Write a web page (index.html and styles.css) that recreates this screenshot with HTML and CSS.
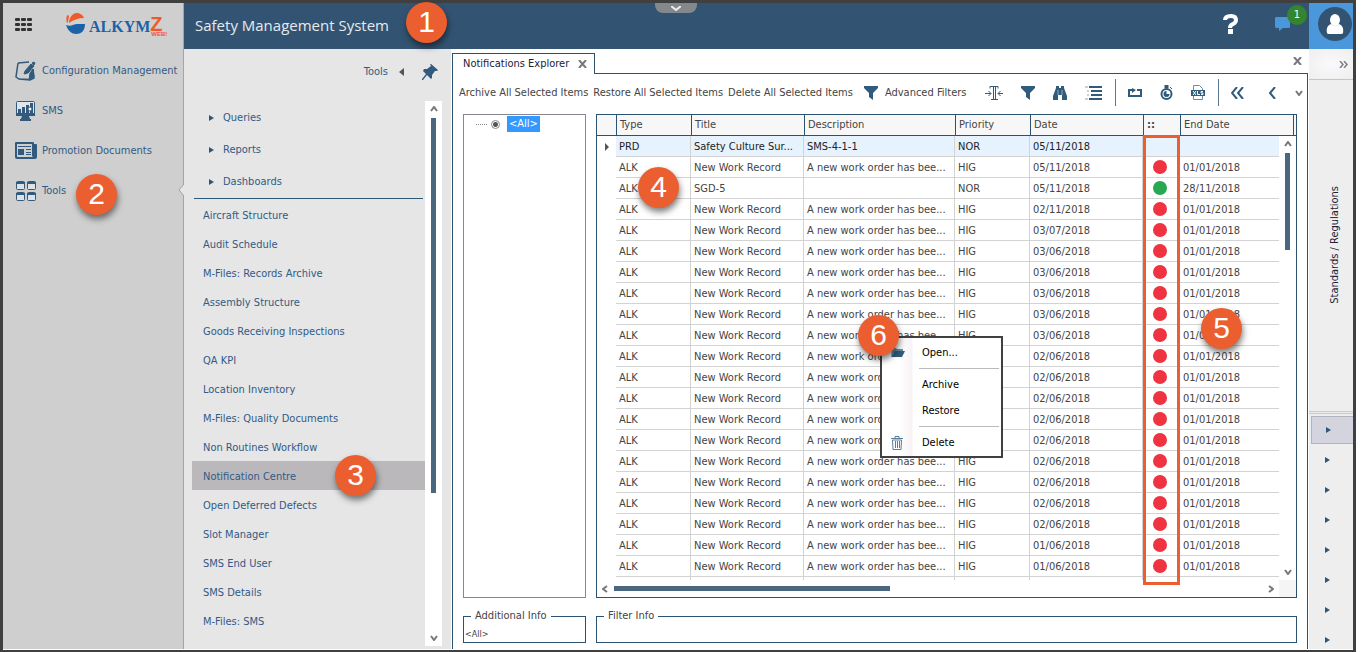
FILE: index.html
```html
<!DOCTYPE html>
<html lang="en">
<head>
  <meta charset="UTF-8" />
  <meta name="viewport" content="width=device-width, initial-scale=1.0"/>
  <title>Safety Management System</title>
  <link rel="stylesheet" href="styles.css">
</head>
<body>

<div class="app">

  <!-- Left menu -->
  <nav class="sidebar">
    <div class="brand">
      <button class="icon-btn" aria-label="Applications">
        <svg width="17" height="13" viewBox="0 0 17 13" fill="#333"><rect width="5" height="3" rx="1"/><rect x="6" width="5" height="3" rx="1"/><rect x="12" width="5" height="3" rx="1"/><rect y="5" width="5" height="3" rx="1"/><rect x="6" y="5" width="5" height="3" rx="1"/><rect x="12" y="5" width="5" height="3" rx="1"/><rect y="10" width="5" height="3" rx="1"/><rect x="6" y="10" width="5" height="3" rx="1"/><rect x="12" y="10" width="5" height="3" rx="1"/></svg>
      </button>
      <a class="logo" href="#">
        <svg width="20" height="22" viewBox="0 0 20 22"><path d="M1 10C0 6 0 3 2 2l1 1-1 6z" fill="#f05a28"/><path d="M3 10C3 5 6 1 10 0c4 0 7 2 8 5C12 5 7 7 3 10z" fill="#f05a28"/><path d="M0 12c5 2 8-1 11-1h8c0 7-4 10-9 10-4 0-8-3-10-9z" fill="#1b62a8"/></svg>
        <span class="logo-name">ALKYM</span><span class="logo-z">Z<small>WEB!</small></span>
      </a>
    </div>
    <ul class="menu">
      <li><a href="#">
        <svg width="22" height="20" viewBox="0 0 22 20" fill="none" stroke="#325a7d"><path d="M3 2l11-1M18 8l1 9-4 2-11-1L1 16 3 2M4 18l11 .500" stroke-width="1.500"/><path d="M14 19l5-3-1-8-3 4z" fill="#325a7d"/><path d="M9 13l1-3 6-7 3 2-6 7z" fill="#325a7d"/><path d="M17 2l2 2 1-2-1-1z" fill="#325a7d"/></svg>
        Configuration Management</a></li>
      <li><a href="#">
        <svg width="22" height="20" viewBox="0 0 22 20"><rect x="1.500" y=".500" width="18" height="14" rx="1" fill="#dfe5ea" stroke="#325a7d"/><path d="M1 12h19v3H1zM7 15h7l1 3H6zM5 18h11v2H5zM3 8h3v4H3zM7 6h3v6H7zM11 4h3v8h-3zM15 2h3v10h-3z" fill="#325a7d"/><circle cx="15" cy="8" r="2" fill="#fff" stroke="#325a7d"/></svg>
        SMS</a></li>
      <li><a href="#">
        <svg width="22" height="20" viewBox="0 0 22 20" fill="#325a7d"><path d="M0 2q0-1 1-1h17q1 0 1 1v1h2q1 0 1 1v12q0 2-2 2H2q-2 0-2-2zM2 3v12q0 1 1 1h15l-1-1V3z" fill-rule="evenodd"/><path d="M3 5h13v1H3zM3 8h6v6H3zM11 8h5v1h-5zM11 11h5v1h-5zM11 13h5v1h-5z"/></svg>
        Promotion Documents</a></li>
      <li class="open"><a href="#">
        <svg width="22" height="20" viewBox="0 0 22 20"><g fill="#dde2e6" stroke="#325a7d"><rect x="1.500" y=".500" width="8" height="8" rx="1"/><rect x="12.500" y=".500" width="8" height="8" rx="1"/><rect x="1.500" y="11.500" width="8" height="8" rx="1"/><rect x="12.500" y="11.500" width="8" height="8" rx="1"/></g><path d="M1 1h9v2H1zM12 1h9v2h-9zM1 12h9v2H1zM12 12h9v2h-9z" fill="#325a7d"/></svg>
        Tools</a>
        <svg class="notch" width="6" height="12" viewBox="0 0 6 12"><path d="M6 0L1 6l5 6" fill="#e6e6e6" stroke="#a0a0a0"/></svg>
        <span class="callout callout-2">2</span>
      </li>
    </ul>
  </nav>

  <!-- Top bar -->
  <header class="topbar">
    <h1>Safety Management System</h1>
    <span class="callout callout-1">1</span>
    <button class="pull-tab" aria-label="Expand header"><svg width="10" height="5" viewBox="0 0 10 5"><path d="M0 0l5 4 5-4" fill="none" stroke="#eee" stroke-width="2"/></svg></button>
    <div class="top-actions">
      <button class="icon-btn" aria-label="Help"><svg width="16" height="20" viewBox="0 0 16 20"><path d="M2 6C2 3 4 2 8 2s5 2 5 4-1 3-3 4-3 1-3 4" fill="none" stroke="#fff" stroke-width="4"/><rect x="5" y="15" width="5" height="5" fill="#fff"/></svg></button>
      <button class="icon-btn messages" aria-label="Messages"><svg width="15" height="14" viewBox="0 0 15 14"><path d="M1 0h13l1 1v9l-1 1H8l-4 3v-3H1l-1-1V1z" fill="#4b97db"/></svg><span class="count">1</span></button>
    </div>
    <button class="user" aria-label="User">
      <svg width="34" height="34" viewBox="0 0 34 34"><circle cx="17" cy="17" r="17" fill="#325472"/><path d="M9 26c-1-5 1-8 4-9q4 3 8 0c3 1 5 4 4 9q0 1-2 1H11q-2 0-2-1z" fill="#fff"/><ellipse cx="17" cy="13" rx="5" ry="6" fill="#fff"/></svg>
    </button>
  </header>

  <!-- Tools panel -->
  <aside class="panel">
    <div class="panel-head">
      <span>Tools</span>
      <svg width="5" height="8" viewBox="0 0 5 8"><path d="M5 0v8L0 4z" fill="#555"/></svg>
      <button class="icon-btn" aria-label="Pin"><svg width="16" height="16" viewBox="0 0 16 16"><path d="M9 0l7 6-1 1-2 0-3 4 0 3-1 1-4-4-4 5-1 0 0-1 4-5-3-3 1-2h3l4-3-1-2z" fill="#325a7d"/></svg></button>
    </div>
    <div class="panel-body">
      <div class="panel-list">
        <ul class="tree">
          <li><a href="#">Queries</a></li>
          <li><a href="#">Reports</a></li>
          <li><a href="#">Dashboards</a></li>
        </ul>
        <ul class="links">
          <li><a href="#">Aircraft Structure</a></li>
          <li><a href="#">Audit Schedule</a></li>
          <li><a href="#">M-Files: Records Archive</a></li>
          <li><a href="#">Assembly Structure</a></li>
          <li><a href="#">Goods Receiving Inspections</a></li>
          <li><a href="#">QA KPI</a></li>
          <li><a href="#">Location Inventory</a></li>
          <li><a href="#">M-Files: Quality Documents</a></li>
          <li><a href="#">Non Routines Workflow</a></li>
          <li class="current"><a href="#">Notification Centre</a><span class="callout callout-3">3</span></li>
          <li><a href="#">Open Deferred Defects</a></li>
          <li><a href="#">Slot Manager</a></li>
          <li><a href="#">SMS End User</a></li>
          <li><a href="#">SMS Details</a></li>
          <li><a href="#">M-Files: SMS</a></li>
        </ul>
      </div>
      <div class="scroll-v">
        <svg width="8" height="6" viewBox="0 0 8 6"><path d="M1 5l3-4 3 4" fill="none" stroke="#777" stroke-width="2"/></svg>
        <span class="thumb"></span>
        <svg width="8" height="6" viewBox="0 0 8 6"><path d="M1 1l3 4 3-4" fill="none" stroke="#777" stroke-width="2"/></svg>
      </div>
    </div>
  </aside>

  <!-- Notifications Explorer -->
  <main class="content">
    <div class="tabs">
      <div class="tab">Notifications Explorer
        <button class="icon-btn" aria-label="Close tab"><svg width="9" height="8" viewBox="0 0 9 8"><path d="M1 0l7 8M8 0L1 8" stroke="#77777f" stroke-width="2"/></svg></button>
      </div>
      <button class="icon-btn close-all" aria-label="Close"><svg width="9" height="8" viewBox="0 0 9 8"><path d="M1 0l7 8M8 0L1 8" stroke="#77777f" stroke-width="2"/></svg></button>
    </div>

    <div class="page">
      <div class="toolbar">
        <button>Archive All Selected Items</button>
        <button>Restore All Selected Items</button>
        <button>Delete All Selected Items</button>
        <button class="advanced"><svg width="14" height="14" viewBox="0 0 14 14"><path d="M0 0h14v2L9 7v7l-4-3V7L0 2z" fill="#2f5b7c"/></svg>Advanced Filters</button>
        <div class="tools">
          <button aria-label="Fit columns"><svg width="18" height="16" viewBox="0 0 18 16" fill="none" stroke="#325a7d"><path d="M5 3.500V1.500h8v2M8.500 1v13M10.500 1v13M6 14.500h7"/><path d="M0 8.500h6M3.500 6l2.500 2.500L3.500 11M18 8.500h-5M15.500 6L13 8.500l2.500 2.500"/></svg></button>
          <button aria-label="Filter"><svg width="14" height="14" viewBox="0 0 14 14"><path d="M0 0h14v2L9 7v7l-4-3V7L0 2z" fill="#2f5b7c"/></svg></button>
          <button aria-label="Find"><svg width="14" height="14" viewBox="0 0 14 14"><path d="M3 0h3v2h2V0h3v2l3 8v4H9V9H5v5H0v-4l3-8z" fill="#2f5b7c"/><path d="M5 4v5M9 4v5" stroke="#9ab" /></svg></button>
          <button aria-label="Group"><svg width="17" height="14" viewBox="0 0 17 14"><path d="M4 0h13v2H4zM6 4h11v2H6zM6 8h11v2H6zM4 12h13v2H4z" fill="#2f5b7c"/><path d="M0 1h3M2 5h2M2 9h2M0 13h3" stroke="#8aa"/></svg></button>
          <span class="sep"></span>
          <button aria-label="Refresh"><svg width="14" height="10" viewBox="0 0 14 10"><path d="M4 2H1v6h12V2H9" fill="none" stroke="#2f5b7c" stroke-width="2"/><path d="M4 0l4 2-4 3z" fill="#2f5b7c"/></svg></button>
          <button aria-label="Timer"><svg width="13" height="15" viewBox="0 0 13 15"><path d="M5 0h3v3H5zM10 2l2 2" stroke="#2f5b7c" fill="#2f5b7c"/><circle cx="6.500" cy="9" r="5" fill="#fff" stroke="#2f5b7c" stroke-width="2"/><path d="M6.500 6v3h3a3 3 0 1 1-3-3" fill="#2f5b7c"/></svg></button>
          <button aria-label="Export to XLS"><svg width="14" height="15" viewBox="0 0 14 15"><path d="M2.500 5V.500h6l3 3V5M2.500 11v3.500h9V11" fill="none" stroke="#6f8ca3"/><rect y="5" width="14" height="6" fill="#2f5b7c"/><path d="M2 6l3 4M5 6l-3 4M6.500 6v3.500H9M12 6.500h-2v1.500h2v1.500h-2" fill="none" stroke="#fff"/></svg></button>
          <span class="sep"></span>
          <button aria-label="First"><svg width="13" height="12" viewBox="0 0 13 12"><path d="M6 0L1 6l5 6M12 0L7 6l5 6" fill="none" stroke="#2f5b7c" stroke-width="2"/></svg></button>
          <button class="prev" aria-label="Previous"><svg width="9" height="12" viewBox="0 0 9 12"><path d="M7 0L2 6l5 6" fill="none" stroke="#2f5b7c" stroke-width="2"/></svg></button>
          <button aria-label="More"><svg width="8" height="6" viewBox="0 0 8 6"><path d="M1 1l3 4 3-4" fill="none" stroke="#777" stroke-width="2"/></svg></button>
        </div>
      </div>

      <div class="work">
        <div class="filter-tree">
          <label><span class="dots"></span><input type="radio" name="filter" checked><span class="picked">&lt;All&gt;</span></label>
        </div>

        <div class="grid">
          <div class="grid-view">
            <table>
              <colgroup><col class="c-mark"><col class="c-type"><col class="c-title"><col class="c-desc"><col class="c-prio"><col class="c-date"><col class="c-state"><col><col class="c-end"></colgroup>
              <thead>
                <tr><th></th><th>Type</th><th>Title</th><th>Description</th><th>Priority</th><th>Date</th><th>::</th><th>End Date</th><th></th></tr>
              </thead>
              <tbody id="rows"></tbody>
            </table>
            <div class="scroll-v grid-scroll">
              <svg width="8" height="6" viewBox="0 0 8 6"><path d="M1 5l3-4 3 4" fill="none" stroke="#777" stroke-width="2"/></svg>
              <span class="thumb"></span>
              <svg width="8" height="6" viewBox="0 0 8 6"><path d="M1 1l3 4 3-4" fill="none" stroke="#777" stroke-width="2"/></svg>
            </div>
          </div>
          <div class="scroll-h">
            <svg width="6" height="8" viewBox="0 0 6 8"><path d="M5 1L1 4l4 3" fill="none" stroke="#777" stroke-width="2"/></svg>
            <span class="thumb"></span>
            <svg width="6" height="8" viewBox="0 0 6 8"><path d="M1 1l4 3-4 3" fill="none" stroke="#777" stroke-width="2"/></svg>
          </div>

          <div class="outline"></div>
          <span class="callout callout-4">4</span>
          <span class="callout callout-5">5</span>

          <div class="context-menu" role="menu">
            <button role="menuitem"><svg width="14" height="10" viewBox="0 0 14 10"><path d="M1 0h4l1 1h6v3H4L0 8z" fill="#6f8ca3"/><path d="M4 3h10l-3 6H0z" fill="#2f5b7c"/></svg>Open...</button>
            <hr>
            <button role="menuitem">Archive</button>
            <button role="menuitem">Restore</button>
            <hr>
            <button role="menuitem"><svg width="12" height="14" viewBox="0 0 12 14" fill="none" stroke="#5b7d99"><path d="M4 2V.500h4V2M0 2.500h12M1.500 4l.500 9.500h8l.500-9.500z"/><path d="M4.500 5v7M6.500 5v7M8.500 5v7"/></svg>Delete</button>
            <span class="callout callout-6">6</span>
          </div>
        </div>

        <fieldset><legend>Additional Info</legend><small>&lt;All&gt;</small></fieldset>
        <fieldset><legend>Filter Info</legend></fieldset>
      </div>
    </div>
  </main>

  <!-- Right rail -->
  <aside class="rail">
    <button class="rail-head" aria-label="Collapse"><svg width="9" height="7" viewBox="0 0 9 7"><path d="M1 0l3 3.500L1 7M5 0l3 3.500L5 7" fill="none" stroke="#7d7d88" stroke-width="1.500"/></svg></button>
    <div class="rail-title"><span>Standards / Regulations</span></div>
    <div class="rail-items">
      <button class="on" aria-label="Section 1"></button>
      <button aria-label="Section 2"></button>
      <button aria-label="Section 3"></button>
      <button aria-label="Section 4"></button>
      <button aria-label="Section 5"></button>
      <button aria-label="Section 6"></button>
      <button aria-label="Section 7"></button>
      <button aria-label="Section 8"></button>
    </div>
  </aside>

</div>

<script src="script.js"></script>
</body>
</html>
```
FILE: styles.css
```css
* {
  box-sizing: border-box;
}

body {
  margin: 0;
  background: #fff;
  font-family: "DejaVu Sans Condensed", "DejaVu Sans", "Noto Sans", sans-serif;
  font-stretch: condensed;
  font-size: 11px;
  line-height: 16px;
  color: #444;
}

ul {
  list-style: none;
  margin: 0;
  padding: 0;
}

a {
  color: #325a85;
  text-decoration: none;
}

button {
  display: flex;
  align-items: center;
  padding: 0;
  border: none;
  background: none;
  font: inherit;
  color: inherit;
  white-space: nowrap;
  cursor: pointer;
}

svg {
  display: block;
  flex: none;
}

.app {
  display: grid;
  grid-template-columns: 181px 267px 1fr 44px;
  grid-template-rows: 46px 1fr;
  height: 100vh;
  margin-right: 5px;
  padding-bottom: 1px;
  border: 3px solid #404040;
  border-bottom-width: 2px;
}

/* numbered circles */
.callout {
  position: absolute;
  z-index: 5;
  width: 41px;
  height: 41px;
  border-radius: 50%;
  background: #eb5e30;
  box-shadow: 1px 4px 6px rgba(0, 0, 0, 0.5);
  color: #fff;
  font-family: "Liberation Sans", Arial, sans-serif;
  font-stretch: normal;
  font-size: 30px;
  line-height: 40px;
  text-align: center;
}

.callout-1 { left: 222px; top: -1px; }
.callout-2 { left: 73px; top: 3px; }
.callout-3 { left: 143px; top: -6px; }
.callout-4 { left: 41px; top: 52px; }
.callout-5 { right: 54px; top: 193px; }
.callout-6 { left: -24px; top: -23px; }

/* left menu */
.sidebar {
  grid-row: 1 / 3;
  background: #cfcfcf;
  border-right: 1px solid #a5a5a5;
}

.brand {
  display: flex;
  align-items: center;
  gap: 34px;
  height: 48px;
  padding: 0 0 6px 12px;
}

.logo {
  display: flex;
  align-items: center;
}

.logo-name {
  margin-left: 3px;
  padding-top: 5px;
  font: bold 16px/20px "Liberation Serif", serif;
  color: #1b62a8;
}

.logo-z {
  position: relative;
  font: bold 20px/20px "Liberation Sans", sans-serif;
  color: #f05a28;
}

.logo-z small {
  position: absolute;
  left: 1px;
  top: 10px;
  font-size: 6px;
}

.menu li {
  position: relative;
}

.menu a {
  display: flex;
  align-items: center;
  gap: 5px;
  height: 40px;
  padding-left: 12px;
  white-space: nowrap;
}

.notch {
  position: absolute;
  right: -1px;
  top: 13px;
}

/* top bar */
.topbar {
  grid-column: 2 / 5;
  position: relative;
  display: flex;
  align-items: center;
  background: #325472;
}

.topbar h1 {
  margin: 0 0 0 11px;
  padding-bottom: 3px;
  font: 15px/20px "Open Sans", "Noto Sans", sans-serif;
  color: #e6eaee;
}

.pull-tab {
  position: absolute;
  left: 471px;
  top: 0;
  width: 42px;
  height: 10px;
  justify-content: center;
  background: #83888d;
  border-radius: 0 0 8px 8px;
}

.top-actions {
  display: flex;
  align-items: center;
  gap: 36px;
  margin-left: auto;
  padding: 0 19px 5px 0;
}

.messages {
  position: relative;
}

.count {
  position: absolute;
  left: 12px;
  top: -12px;
  width: 20px;
  height: 20px;
  border-radius: 50%;
  background: #34852f;
  color: #fff;
  line-height: 20px;
}

.user {
  width: 44px;
  height: 46px;
  justify-content: flex-end;
  padding: 0 1px 5px 0;
  background: #4b97db;
}

/* tools panel */
.panel {
  display: flex;
  flex-direction: column;
  min-height: 0;
  padding-bottom: 3px;
  background: #e6e6e6;
  color: #325a85;
}

.panel-head {
  display: flex;
  align-items: center;
  justify-content: flex-end;
  gap: 11px;
  height: 46px;
  margin-bottom: 6px;
  padding-right: 13px;
}

.panel-head .icon-btn {
  margin-left: 7px;
}

.panel-body {
  flex: 1;
  display: flex;
  min-height: 0;
  padding-right: 9px;
}

.panel-list {
  flex: 1;
  overflow: hidden;
  padding: 1px 0 0 8px;
}

.tree {
  margin: 0 2px 1px;
  border-bottom: 1px solid #2c5878;
}

.tree li {
  display: flex;
  align-items: center;
  height: 32px;
  padding-left: 15px;
}

.tree li::before,
.rail-items button::before {
  content: "";
  border: 3px solid transparent;
  border-left: 5px solid #2c5878;
  border-right: 0;
}

.tree a {
  padding-left: 9px;
}

.links li {
  position: relative;
  height: 29px;
  padding-left: 11px;
  line-height: 31px;
}

.links .current {
  background: #bbb8bc;
}

/* scrollbars */
.scroll-v {
  display: flex;
  flex-direction: column;
  align-items: center;
  width: 17px;
  padding: 5px 0;
  background: #fff;
}

.thumb {
  background: #4b677f;
}

.scroll-v .thumb {
  width: 5px;
  height: 70%;
  margin: 6px 0 auto;
}

.scroll-h {
  display: flex;
  align-items: center;
  height: 17px;
  padding: 0 22px 0 5px;
  background: linear-gradient(#f5f5f5, #f5f5f5) right / 17px 100% no-repeat;
}

.scroll-h .thumb {
  width: 41%;
  height: 5px;
  margin: 0 auto 0 6px;
}

/* main area */
.content {
  display: flex;
  flex-direction: column;
  min-width: 0;
  min-height: 0;
  margin-right: 1px;
  padding-left: 1px;
}

.tabs {
  display: flex;
  height: 25px;
  padding-top: 4px;
}

.tab {
  position: relative;
  z-index: 1;
  display: flex;
  align-items: center;
  gap: 9px;
  height: 21px;
  padding: 0 7px 0 10px;
  background: #fff;
  border: 1px solid #2c5272;
  border-bottom: 0;
  color: #223;
}

.close-all {
  height: 16px;
  margin-left: auto;
  padding-right: 6px;
}

.page {
  flex: 1;
  display: flex;
  flex-direction: column;
  min-height: 0;
  margin-top: -1px;
  border: 1px solid #2c5272;
  border-bottom: 0;
}

.toolbar {
  display: flex;
  align-items: center;
  gap: 5px;
  height: 37px;
  padding: 0 4px 0 6px;
}

.advanced {
  gap: 7px;
  margin-left: 6px;
}

.tools {
  flex: 1;
  display: flex;
  align-items: center;
  justify-content: space-between;
  padding-left: 14px;
}

.sep {
  width: 1px;
  height: 27px;
  margin: 0 -5px;
  background: #5b7690;
}

.prev {
  margin-left: 6px;
}

.work {
  flex: 1;
  display: grid;
  grid-template-columns: 123px minmax(0, 1fr);
  grid-template-rows: minmax(0, 1fr) 35px;
  gap: 10px;
  min-height: 0;
  padding: 3px 10px 6px;
}

.filter-tree {
  border: 1px solid #888693;
}

.filter-tree label {
  display: flex;
  align-items: center;
  gap: 4px;
  height: 18px;
  padding-left: 12px;
}

.dots {
  width: 11px;
  border-top: 1px dotted #888;
}

.filter-tree input {
  appearance: none;
  width: 9px;
  height: 9px;
  margin: 0 3px 0 0;
  border: 1px solid #888;
  border-radius: 50%;
  background: radial-gradient(#555 2px, #fff 3px);
}

.picked {
  padding: 0 2px;
  background: #3399ff;
  color: #fff;
}

/* grid */
.grid {
  position: relative;
  display: flex;
  flex-direction: column;
  border: 1px solid #2c5272;
}

.grid-view {
  flex: 1;
  position: relative;
  min-height: 0;
  overflow: hidden;
}

table {
  width: 100%;
  table-layout: fixed;
  border-collapse: separate;
  border-spacing: 0;
}

.c-mark { width: 19px; }
.c-type, .c-prio { width: 75px; }
.c-title, .c-date { width: 113px; }
.c-desc { width: 151px; }
.c-state { width: 37px; }
.c-end { width: 3px; }

th {
  height: 21px;
  padding: 0 3px;
  border-bottom: 1px solid #2c5272;
  border-left: 1px solid #2c5272;
  background: #f7f7f7;
  font-weight: normal;
  text-align: left;
}

th:first-child {
  border-left: 0;
}

th:last-child {
  padding: 0;
}

th:nth-child(7) {
  font-weight: bold;
}

td {
  height: 21px;
  padding: 1px 3px 0;
  border-bottom: 1px solid #d3d3d3;
  border-right: 1px solid #d3d3d3;
  white-space: nowrap;
}

td:first-child {
  padding: 0 0 0 8px;
  border: 0;
}

td:nth-child(7) {
  padding: 0 0 0 10px;
}

.active td:not(:first-child) {
  background: #e6f2fd;
  color: #222;
}

.active td:first-child::before {
  content: "";
  display: block;
  width: 0;
  border: 4px solid transparent;
  border-left: 4px solid #555;
  border-right: 0;
}

.state {
  display: block;
  width: 14px;
  height: 14px;
  border-radius: 50%;
  background: #ef3340;
}

.state.ok {
  background: #28a850;
}

.grid-scroll {
  position: absolute;
  right: 0;
  top: 21px;
  bottom: 0;
}

.grid-scroll .thumb {
  height: 97px;
}

/* highlight round the state column */
.outline {
  position: absolute;
  right: 116px;
  top: 20px;
  bottom: 12px;
  width: 37px;
  border: 3px solid #eb5e30;
}

.context-menu {
  position: absolute;
  left: 283px;
  top: 221px;
  width: 123px;
  padding: 1px 0;
  border: 2px solid #404040;
  background: linear-gradient(90deg, #fff 18px, #f6f2f5 30px, #fff 31px);
  color: #000;
}

.context-menu button {
  position: relative;
  width: 100%;
  height: 26px;
  padding: 1px 0 0 40px;
}

.context-menu svg {
  position: absolute;
  left: 9px;
}

.context-menu hr {
  margin: 3px 2px 2px 37px;
  border: 0;
  border-top: 1px solid #bbb;
}

fieldset {
  min-width: 0;
  margin: 0;
  padding: 0 1px;
  border: 1px solid #2c5272;
}

legend {
  margin-left: 6px;
  padding: 0 4px;
}

fieldset small {
  display: block;
  margin-top: 4px;
  font-size: 9px;
  line-height: 12px;
}

/* right rail */
.rail {
  display: flex;
  flex-direction: column;
  min-height: 0;
  overflow: hidden;
  background: #eee;
}

.rail-head {
  height: 31px;
  flex: none;
  justify-content: flex-end;
  padding-right: 5px;
  border-bottom: 1px solid #c4c4cc;
  background: radial-gradient(#fafafc, #eee);
}

.rail-title {
  flex: 1;
  padding: 106px 0 0 18px;
}

.rail-title span {
  writing-mode: vertical-rl;
  transform: rotate(180deg);
  color: #223;
}

.rail-items {
  margin-bottom: -7px;
  padding-left: 2px;
  border-top: 3px double #c8c8d0;
}

.rail-items button {
  width: 100%;
  height: 28px;
  margin: 2px 0;
  padding-left: 14px;
}

.rail-items .on {
  background: #d4d4de;
  border: 1px solid #b4b4c0;
  border-right: 0;
}
```
FILE: script.js
```js
// type, title, description, priority, date, state, end date
const WORK = "A new work order has bee...";

const rows = [
  ["PRD", "Safety Culture Sur...", "SMS-4-1-1", "NOR", "05/11/2018", "", ""],
  ["ALK", "New Work Record", WORK, "HIG", "05/11/2018", "late", "01/01/2018"],
  ["ALK", "SGD-5", "", "NOR", "05/11/2018", "ok", "28/11/2018"]
];

const dates = [
  "02/11/2018", "03/07/2018",
  "03/06/2018", "03/06/2018", "03/06/2018", "03/06/2018", "03/06/2018",
  "02/06/2018", "02/06/2018", "02/06/2018", "02/06/2018", "02/06/2018",
  "02/06/2018", "02/06/2018", "02/06/2018", "02/06/2018",
  "01/06/2018", "01/06/2018"
];
dates.forEach(d => rows.push(["ALK", "New Work Record", WORK, "HIG", d, "late", "01/01/2018"]));

// Last row is only partly in view
rows.push(["", "", "", "", "", "", ""]);

const body = document.getElementById("rows");
rows.forEach((row, i) => {
  const tr = document.createElement("tr");
  if (i === 0) tr.className = "active";
  tr.appendChild(document.createElement("td"));
  row.forEach((value, col) => {
    const td = document.createElement("td");
    if (col === 5) {
      if (value) {
        const dot = document.createElement("span");
        dot.className = "state " + value;
        td.appendChild(dot);
      }
    } else {
      td.textContent = value;
    }
    tr.appendChild(td);
  });
  body.appendChild(tr);
});
```
